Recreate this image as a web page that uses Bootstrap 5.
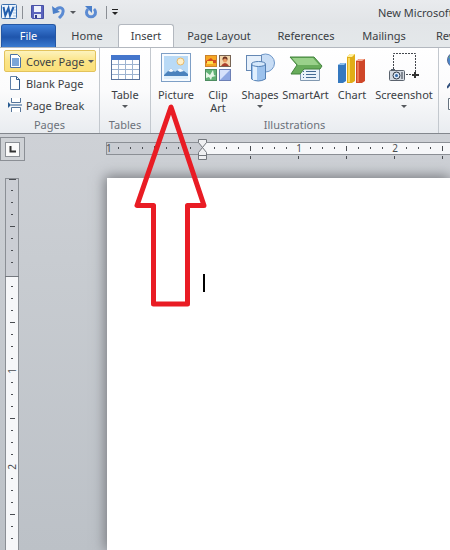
<!DOCTYPE html>
<html lang="en">
<head>
<meta charset="utf-8">
<meta name="viewport" content="width=device-width, initial-scale=1">
<title>New Microsoft Word Document</title>
<link rel="stylesheet" href="https://cdn.jsdelivr.net/npm/bootstrap@5.3.0/dist/css/bootstrap.min.css">
<style>
body{font-family:"Noto Sans","Open Sans",sans-serif;font-size:11px;line-height:13px;color:#3a3e44;background:#c6cacf}
button{font:inherit;color:inherit;background:none;border:0;padding:0}
svg{display:block;flex:none}
.titlebar{height:24px;background:linear-gradient(#e9ebee,#e1e4e7)}
.doc-title{white-space:nowrap;width:72px;overflow:hidden}
.vline{width:1px;height:13px;background:#8a8e94}
.tabs{height:24px;background:linear-gradient(#e2e5e8,#e4e8ea);border-bottom:1px solid #b3b8bf}
.tab-link{height:24px;color:#3a3e44;text-decoration:none;white-space:nowrap;text-align:center;line-height:24px;flex:none}
.tab-file{width:55px;color:#fff;margin-left:1px;height:23px;background:linear-gradient(#3f7fd8,#1f55ac 55%,#3a7bd0);border:1px solid #2557a3;border-bottom:0;border-radius:3px 3px 0 0;line-height:22px}
.tab-active{background:#fff;border:1px solid #b3b8bf;border-bottom:0;border-radius:3px 3px 0 0;line-height:22px}
.w-a{width:62px}.w-b{width:56px}.w-c{width:90px}.w-d{width:84px}.w-e{width:72px}
.ribbon{height:86px;background:linear-gradient(#fff,#fbfbfc 50%,#e9ecf0);border-bottom:1px solid #83878d}
.group{border-right:1px solid #c3c8ce;flex:none}
.group-name{height:15px;line-height:13px;color:#6b717a;text-align:center}
.g-pages{width:100px}.g-tables{width:51px}.g-ill{width:288px}
.small-list{padding:2px 0 0 4px}
.small-btn{height:22px;width:92px;border:1px solid transparent;border-radius:2px;text-align:left;white-space:nowrap;padding:0 3px}
.small-btn.hot{background:linear-gradient(#fdf3bd,#fbe487 50%,#fbe07a);border-color:#e3c35c}
.big-btn{white-space:nowrap;padding-top:4px;gap:4px}
.b-42{width:42px}.b-44{width:44px}.b-48{width:49px}.b-60{width:60px}
.tri{width:0;height:0;border:3px solid transparent;border-top-color:#55585d;border-bottom:0}
.work{background:linear-gradient(#ced1d6,#c8ccd1 30%,#bcc1c7)}
.rulerbar{height:44px;padding-top:2px}
.corner{width:25px;height:24px;margin-top:1px;border:1px solid #8b8f95;background:#cfd2d6}
.corner-in{width:15px;height:15px;background:#fafafa;border:1px solid #8b8f95}
.hruler{height:26px;margin-left:81px}
.hruler svg{width:100%}
.vcol{width:107px;padding-left:5px}
.paper{background:#fff;box-shadow:-1px -1px 12px 1px #77797e;padding:96px 0 0 96px}
.caret{width:2px;height:18px;background:#000}
.big-arrow{left:133px;top:102px;pointer-events:none}
svg text{font-family:"Noto Sans",sans-serif;font-size:10px;fill:#4a4d52}
</style>
</head>
<body class="d-flex flex-column min-vh-100 overflow-hidden">
<header>
<div class="titlebar d-flex align-items-center overflow-hidden">
 <svg width="18" height="24" viewBox="0 0 18 24"><rect x="1.500" y="4.500" width="15" height="14" rx="1" fill="#eef5fc" stroke="#3b6fae"/><path d="M13 7h3M13 10h3M13 13h3M13 16h3" stroke="#a9c4e4"/><path d="M3.500 7l1.800 8.500L8.500 8l1.500 7.500L13.500 7" fill="none" stroke="#2460ae" stroke-width="2"/></svg>
 <span class="vline ms-1"></span>
 <button aria-label="Save" class="ms-2"><svg width="13" height="14"><path d="M.5.500h12v13h-11l-1-1z" fill="#5a63bd" stroke="#4750a5"/><rect x="3" y="1" width="7" height="6" fill="#eef1fb"/><rect x="3" y="9" width="7" height="4" fill="#e2e6f4"/><rect x="4" y="10" width="2" height="3" fill="#333c8b"/></svg></button>
 <button aria-label="Undo" class="ms-2"><svg width="14" height="14"><path d="M3 6C6 1 12 2 11 7c0 3-2 4-4 6" fill="none" stroke="#5b8bd3" stroke-width="3"/><path d="M0 1l1 8 7-2z" fill="#4b7fc9"/></svg></button>
 <span class="tri ms-1"></span>
 <button aria-label="Repeat" class="ms-2"><svg width="14" height="14"><path d="M10 4a4.500 4.500 0 1 1-6 0" fill="none" stroke="#5b8bd3" stroke-width="3"/><path d="M1 1h7v7z" fill="#4b7fc9"/></svg></button>
 <span class="vline ms-2"></span>
 <button aria-label="Customize" class="ms-1"><svg width="8" height="8"><path d="M1 1.500h6" stroke="#222"/><path d="M1 4h6L4 7z" fill="#222"/></svg></button>
 <span class="doc-title ms-auto">New Microsoft Word</span>
</div>
<nav class="tabs d-flex overflow-hidden" aria-label="Ribbon tabs">
 <a href="#" class="tab-link tab-file">File</a><a href="#" class="tab-link w-a">Home</a><a href="#" class="tab-link tab-active w-b">Insert</a><a href="#" class="tab-link w-c">Page Layout</a><a href="#" class="tab-link w-d">References</a><a href="#" class="tab-link w-e">Mailings</a><a href="#" class="tab-link px-3">Review</a>
</nav>
<div class="ribbon d-flex overflow-hidden">
 <section class="group g-pages d-flex flex-column">
  <div class="flex-grow-1 small-list">
  <button class="small-btn hot d-flex align-items-center gap-1"><svg width="14" height="14"><path d="M2.500.500h7l3 3v10h-10z" fill="#fff" stroke="#4872a8"/><rect x="4" y="4" width="7" height="8" fill="#7ba6d8"/></svg><span>Cover Page</span><span class="tri"></span></button>
  <button class="small-btn d-flex align-items-center gap-1"><svg width="14" height="14"><path d="M2.500.500h6l3 3v10h-9z" fill="#fff" stroke="#6080a8"/><path d="M8.500.500v3h3v10" fill="none" stroke="#315a8c"/></svg><span>Blank Page</span></button>
  <button class="small-btn d-flex align-items-center gap-1"><svg width="14" height="14"><path d="M0 4l3 3-3 3z" fill="#285b91"/><path d="M3.500 0v4.500h9V0M3.500 14V9.500h9V14" fill="#fff" stroke="#55759b"/><path d="M3 7h11" stroke="#285b91"/></svg><span>Page Break</span></button>
  </div>
  <div class="group-name">Pages</div>
 </section>
 <section class="group g-tables d-flex flex-column">
  <button class="big-btn flex-grow-1 d-flex flex-column align-items-center"><svg width="32" height="32"><rect x="2.500" y="3.500" width="28" height="24" fill="#fff" stroke="#58739d"/><rect x="2" y="3" width="29" height="5" fill="#4476cc"/><path d="M3 12.500h27M3 17.500h27M3 22.500h27M9.500 8v19M16.500 8v19M23.500 8v19" stroke="#9db3d0"/></svg><span>Table</span><span class="tri"></span></button>
  <div class="group-name">Tables</div>
 </section>
 <section class="group g-ill d-flex flex-column">
  <div class="flex-grow-1 d-flex ps-1">
  <button class="big-btn b-42 d-flex flex-column align-items-center"><svg width="32" height="32"><rect x="1.500" y="1.500" width="29" height="28" fill="#f7fbff" stroke="#7e9fc6"/><rect x="4" y="4" width="24" height="23" fill="#b9daf6"/><circle cx="20.500" cy="9.500" r="3.500" fill="#fff0c9" stroke="#e8b868"/><path d="M4 23l7-7 4 4 5-4 8 6v3H4z" fill="#4b82bd"/><path d="M8 19l3-3 3 3-3 1zM17 18l3-2 4 3-4 1z" fill="#f3f9ff"/><path d="M4 24h24v3H4z" fill="#e0effb"/></svg><span>Picture</span></button>
  <button class="big-btn b-42 d-flex flex-column align-items-center"><svg width="32" height="32"><rect x="3.500" y="3.500" width="11" height="11" fill="#f6a723" stroke="#c9812d"/><path d="M4 9l5-3 2 2h3v3H4z" fill="#d54b1f"/><rect x="5" y="9" width="6" height="3" fill="#ffe04f"/><rect x="17.500" y="3.500" width="11" height="11" fill="#f3d7ab" stroke="#776454"/><circle cx="23" cy="7" r="2.500" fill="#6d3220"/><circle cx="23" cy="8.500" r="2" fill="#e99c63"/><path d="M19 14q4-6 8 0z" fill="#ab3f2d"/><rect x="3.500" y="17.500" width="11" height="11" fill="#62b176" stroke="#4d8c60"/><path d="M4 20l4 3 3-5 1 5 2 1-4 1-1 3-2-3-3 1z" fill="#e5f6e6"/><rect x="17.500" y="17.500" width="11" height="11" fill="#d7e2fb" stroke="#6d80b5"/><path d="M18 28L28 18v10z" fill="#8fa8e3"/></svg><span class="text-center">Clip<br>Art</span></button>
  <button class="big-btn b-42 d-flex flex-column align-items-center"><svg width="32" height="32"><circle cx="21.500" cy="11" r="9" fill="#c8ddf5" stroke="#6d96c8"/><rect x="2.500" y="3.500" width="15" height="15" fill="#e6f0fb" stroke="#6588b4"/><path d="M7.500 12v15q6.500 4 14 0V12" fill="#9cc2ed" stroke="#5480b4"/><path d="M9 13h4v15H9z" fill="#e0effd"/><ellipse cx="14.500" cy="12" rx="7" ry="2.500" fill="#d5e8fb" stroke="#5480b4"/></svg><span>Shapes</span><span class="tri"></span></button>
  <button class="big-btn b-48 d-flex flex-column align-items-center"><svg width="34" height="32"><path d="M11.500 13.500h19v15h-19z" fill="#eaf2fa" stroke="#8198b0"/><path d="M1 5h24l8 9-2 3H15l-4 5H2l6-9z" fill="#68ac5b" stroke="#42833d"/><path d="M3 6h21l6 7H9z" fill="#9ad18b"/><path d="M17 19.500h10M17 22.500h10M17 25.500h10M14 19.500h1M14 22.500h1M14 25.500h1" stroke="#456b93"/></svg><span>SmartArt</span></button>
  <button class="big-btn b-44 d-flex flex-column align-items-center"><svg width="32" height="32"><path d="M2 13l3-2h5v18l-3 2H2z" fill="#3478bf"/><path d="M2 13l3-2h5l-2 2z" fill="#8dc1ee"/><path d="M11 5l3-3h5v27l-3 2h-5z" fill="#e0ad17"/><path d="M11 5l3-3h5l-3 3z" fill="#fff09c"/><path d="M12 6h2v24h-2z" fill="#fbd85a"/><path d="M20 9l3-2h6v22l-3 2h-6z" fill="#cf4628"/><path d="M20 9l3-2h6l-3 2z" fill="#f6ac93"/><path d="M21 10h2v20h-2z" fill="#ec7554"/></svg><span>Chart</span></button>
  <button class="big-btn b-60 d-flex flex-column align-items-center"><svg width="32" height="32"><path d="M5.500 17V1.500h22V20M18 22.500h6" fill="none" stroke="#44484e" stroke-dasharray="2 1"/><path d="M27 20v6M24 23h7" stroke="#333" stroke-width="2"/><rect x="1.500" y="18.500" width="15" height="10" rx="1" fill="#d4dae1" stroke="#5a626d"/><path d="M3 17h4v1H3z" fill="#5a626d"/><circle cx="8.500" cy="23.500" r="3.500" fill="#dbe8f8" stroke="#303945"/><circle cx="8.500" cy="23.500" r="1.500" fill="#3569a4"/><path d="M14 20v7" stroke="#303945"/></svg><span>Screenshot</span><span class="tri"></span></button>
  </div>
  <div class="group-name">Illustrations</div>
 </section>
 <section class="group ps-2 pt-1">
  <button aria-label="Hyperlink" class="d-block mb-2"><svg width="16" height="16"><circle cx="8" cy="8" r="7.500" fill="#4b87cf" stroke="#5a6b91"/><path d="M2 5q5-4 7 0t-3 7z" fill="#6cb464"/></svg></button>
  <button aria-label="Bookmark" class="d-block mb-2"><svg width="16" height="14"><path d="M0 12l3-4 4 1" fill="none" stroke="#33517d" stroke-width="2"/></svg></button>
  <button aria-label="Cross-reference" class="d-block"><svg width="16" height="14"><path d="M1.500.500h12v11h-12z" fill="#fff" stroke="#66727f"/></svg></button>
 </section>
</div>
</header>
<main class="work flex-grow-1 d-flex flex-column">
 <div class="rulerbar d-flex">
  <button class="corner d-flex align-items-center justify-content-center flex-shrink-0" aria-label="Tab selector"><span class="corner-in d-flex align-items-center justify-content-center"><svg width="7" height="7"><path d="M1.500 0v5.500H7" fill="none" stroke="#333" stroke-width="2"/></svg></span></button>
  <div class="hruler flex-grow-1">
  <svg height="26" role="img" aria-label="Horizontal ruler">
   <defs>
    <pattern id="ht" x="96" width="48" height="26" patternUnits="userSpaceOnUse"><path d="M12.500 11v2M24.500 11v2M36.500 11v2" stroke="#4a4d52"/></pattern>
    <pattern id="hh" x="96" width="96" height="26" patternUnits="userSpaceOnUse"><path d="M48.500 10v5M48.500 20v3M.5 20v3" stroke="#4a4d52"/></pattern>
   </defs>
   <rect y="6" width="100%" height="13" fill="#8b8f95"/><rect x="1" y="7" width="100%" height="11" fill="#f6f7f9"/><rect x="1" y="7" width="96" height="11" fill="#c9ccd2"/>
   <rect width="100%" height="19" fill="url(#ht)"/><rect x="97" width="100%" height="26" fill="url(#hh)"/><path d="M48.500 10v5" stroke="#4a4d52"/>
   <text x="0" y="16">1</text><text x="193" y="16" text-anchor="middle">1</text><text x="289" y="16" text-anchor="middle">2</text>
   <path d="M92.500 3.500h8v3l-4 5 4 5v7h-8v-7l4-5-4-5zM92.500 19.500h8" fill="#eff0f2" stroke="#74787e"/>
  </svg>
  </div>
 </div>
 <div class="flex-grow-1 d-flex overflow-visible">
  <div class="vcol flex-shrink-0 d-flex">
   <svg width="14" height="100%" role="img" aria-label="Vertical ruler">
    <defs>
     <pattern id="vt" y="0" width="14" height="48" patternUnits="userSpaceOnUse"><path d="M6 12.500h2M6 24.500h2M6 36.500h2" stroke="#4a4d52"/></pattern>
     <pattern id="vh" y="0" width="14" height="96" patternUnits="userSpaceOnUse"><path d="M5 48.500h5" stroke="#4a4d52"/></pattern>
    </defs>
    <rect width="14" height="100%" fill="#8b8f95"/><rect x="1" y="1" width="12" height="98" fill="#cbced4"/><rect x="1" y="99" width="12" height="100%" fill="#f6f7f9"/><path d="M0 98.500h14" stroke="#74787e"/>
    <rect width="14" height="100%" fill="url(#vt)"/><rect width="14" height="100%" fill="url(#vh)"/><path d="M4 1.500h7" stroke="#4a4d52"/>
    <text transform="translate(11 193) rotate(-90)" text-anchor="middle">1</text><text transform="translate(11 289) rotate(-90)" text-anchor="middle">2</text>
   </svg>
  </div>
  <article class="paper flex-grow-1" aria-label="Document"><div class="caret"></div></article>
 </div>
</main>
<svg class="big-arrow position-absolute" width="75" height="206"><path d="M38 5L4 103.500h16.500v98.500h34v-98.500H71z" fill="none" stroke="#e91c24" stroke-width="5" stroke-linejoin="round"/></svg>
<script src="https://cdn.jsdelivr.net/npm/bootstrap@5.3.0/dist/js/bootstrap.bundle.min.js"></script>
</body>
</html>
